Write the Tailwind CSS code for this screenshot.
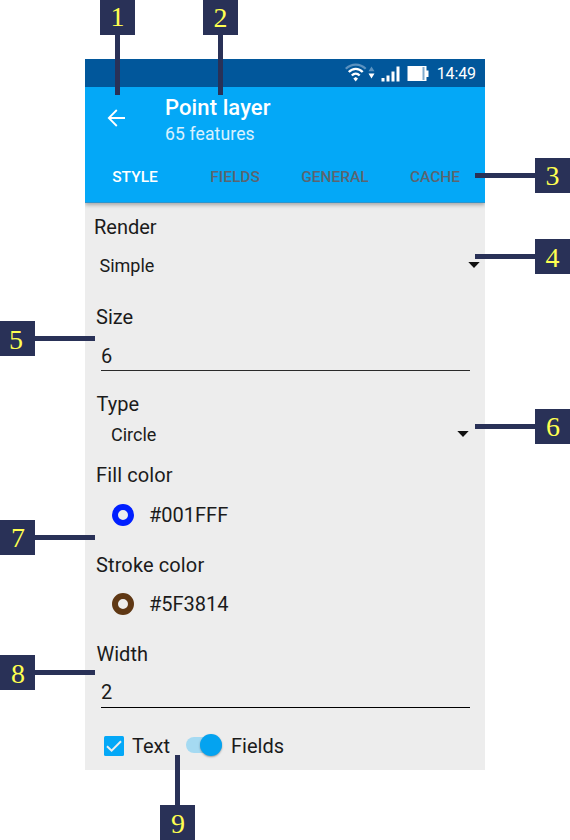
<!DOCTYPE html>
<html lang="en">
<head>
<meta charset="utf-8">
<title>Point layer</title>
<script src="https://cdn.jsdelivr.net/npm/@tailwindcss/browser@4"></script>
</head>
<body class="bg-white">
<div class="relative h-[840px] w-[570px] overflow-hidden pt-[59px] pl-[85px] font-['Roboto',sans-serif]">
  <main class="flex h-[711px] w-[400px] flex-col bg-[#ededed] text-xl text-[#1b1b1b]">
    <header class="relative h-[144px] shrink-0 border-b border-[#2d94cc] bg-[#04a8f7] shadow-[0_2px_4px_rgba(0,0,0,0.3)] [clip-path:inset(0_0_-8px_0)]">
      <div class="flex h-7 items-center justify-end bg-[#01579b] pr-[9px] text-white">
        <svg class="mr-[8px]" width="84" height="28" viewBox="0 0 84 28" aria-hidden="true">
          <g fill="none" stroke-width="2.300">
            <path d="M.8 9.800C6.500 4.200 15 4.200 20.700 9.800" stroke="#5b92c0"/>
            <path d="M3.800 13C7.800 8.700 13.700 8.700 17.700 13" stroke="#fff"/>
            <path d="M6.800 16.500C9.200 14 12.300 14 14.700 16.500" stroke="#fff"/>
          </g>
          <path d="M8.300 19.500 10.700 18 13 19.500 10.700 22.500Z" fill="#fff"/>
          <path d="M23.500 12.300 26.500 7.500 29.500 12.300Z" fill="#5b92c0"/>
          <path d="M23.500 14.500 26.500 19.500 29.500 14.500Z" fill="#fff"/>
          <path d="M36.500 19h3v3.500h-3zM41.500 16.500h3v6h-3zM46.500 12.500h3v10h-3zM51.500 7.500h3v15h-3z" fill="#fff"/>
          <path d="M62.500 7h19v4.500h2v6.500h-2v4h-19z" fill="#fff"/>
          <path d="M77.500 8h2v13h-2z" fill="#80abcd"/>
        </svg>
        <span class="mt-0.5 text-[16px] leading-5 tracking-[-0.1px]">14:49</span>
      </div>
      <div class="flex h-[63px] pt-[9px] pl-[22px] text-white">
        <svg class="mt-[13px]" width="20" height="18" viewBox="0 0 20 18" fill="none" stroke="#fff" stroke-width="1.800" aria-hidden="true"><path d="M18 9H2M9.800 1 1.800 9l8 8"/></svg>
        <div class="ml-[38px]">
          <h1 class="text-[22px] leading-[24px] font-medium tracking-[0.1px]">Point layer</h1>
          <p class="text-[17.500px] leading-[29px] tracking-[0.150px] text-white/85">65 features</p>
        </div>
      </div>
      <nav class="grid h-[52px] grid-cols-4 items-center pt-[3px] text-center text-[15.500px] font-medium text-[#5c6470]">
        <span class="text-white">STYLE</span><span>FIELDS</span><span>GENERAL</span><span>CACHE</span>
      </nav>
    </header>

    <div class="flex h-12 items-center pb-px pl-[9px]">Render</div>
    <div class="flex h-[30px] items-center justify-between pr-[5px] pl-[14.500px] text-lg">Simple
      <svg class="mb-[2px]" width="12" height="6" viewBox="0 0 12 6" aria-hidden="true"><path d="M.3 0h11.400L6 6z" fill="#111"/></svg>
    </div>
    <div class="mt-[16px] mb-px flex h-10 items-center pl-[11px]">Size</div>
    <div class="mr-[15px] ml-4 flex h-[33px] items-center border-b border-[#2a2a2a] pt-1">6</div>
    <div class="mt-[18px] flex h-[30px] items-center pl-[11.500px]">Type</div>
    <div class="flex h-8 items-center justify-between pr-4 pl-[26px] text-lg">Circle
      <svg class="mb-[2px]" width="12" height="6" viewBox="0 0 12 6" aria-hidden="true"><path d="M.3 0h11.400L6 6z" fill="#111"/></svg>
    </div>
    <div class="flex h-12 items-center pl-[11px] tracking-[0.120px]">Fill color</div>
    <div class="flex h-8 items-center gap-[15px] pl-[27px]"><span class="mb-px size-[22px] rounded-full border-6 border-[#001fff]"></span>#001FFF</div>
    <div class="mt-[14px] flex h-10 items-center pl-[11px] tracking-[0.120px]">Stroke color</div>
    <div class="flex h-[38px] items-center gap-[15px] pl-[27px]"><span class="mb-px size-[22px] rounded-full border-6 border-[#5f3814]"></span>#5F3814</div>
    <div class="mt-[11px] flex h-10 items-center pl-[11.500px]">Width</div>
    <div class="mr-[15px] ml-4 flex h-[34px] items-center border-b border-black pt-[3px]">2</div>
    <div class="mt-[14px] flex h-12 items-center pl-[19px]">
      <svg class="mb-px" width="20" height="20" viewBox="0 0 20 20" aria-hidden="true"><rect width="20" height="20" rx="1.500" fill="#04a8f7"/><path d="M3 10.200 7.600 14.700 17 5.200" fill="none" stroke="#ededed" stroke-width="2"/></svg>
      <span class="ml-2">Text</span>
      <span class="mb-[2px] ml-[16px] flex h-4 w-9 items-center justify-end rounded-full bg-[#a5daf2]"><span class="size-[22px] shrink-0 rounded-full bg-[#04a3f0] shadow-[0_1px_2px_rgba(0,0,0,0.35)]"></span></span>
      <span class="ml-[9px]">Fields</span>
    </div>
  </main>

  <!-- numbered callouts over the screen -->
  <div class="font-['Liberation_Serif',serif] text-[28px] leading-[35px] text-[#ffff50]">
    <div class="absolute top-0 left-[100px] flex flex-col items-center"><b class="h-[35px] w-[35px] bg-[#293157] text-center font-normal leading-[33px]">1</b><i class="h-[60px] w-[5px] bg-[#293157]"></i></div>
    <div class="absolute top-0 left-[203px] flex flex-col items-center"><b class="h-[35px] w-[35px] bg-[#293157] text-center font-normal">2</b><i class="h-[60px] w-[5px] bg-[#293157]"></i></div>
    <div class="absolute top-[158px] left-[475px] flex items-center"><i class="h-[5px] w-[60px] bg-[#293157]"></i><b class="h-[35px] w-[35px] bg-[#293157] text-center font-normal">3</b></div>
    <div class="absolute top-[239px] left-[475px] flex items-center"><i class="h-[5px] w-[60px] bg-[#293157]"></i><b class="h-[35px] w-[35px] bg-[#293157] text-center font-normal leading-[37px]">4</b></div>
    <div class="absolute top-[321px] left-0 flex items-center"><b class="h-[35px] w-[35px] bg-[#293157] pr-[3px] text-center font-normal leading-[37px]">5</b><i class="h-[5px] w-[60px] bg-[#293157]"></i></div>
    <div class="absolute top-[409px] left-[475px] flex items-center"><i class="h-[5px] w-[60px] bg-[#293157]"></i><b class="h-[35px] w-[35px] bg-[#293157] pl-px text-center font-normal">6</b></div>
    <div class="absolute top-[520px] left-0 flex items-center"><b class="h-[35px] w-[35px] bg-[#293157] pl-px text-center font-normal">7</b><i class="h-[5px] w-[60px] bg-[#293157]"></i></div>
    <div class="absolute top-[655px] left-0 flex items-center"><b class="h-[35px] w-[35px] bg-[#293157] pl-px text-center font-normal leading-[37px]">8</b><i class="h-[5px] w-[60px] bg-[#293157]"></i></div>
    <div class="absolute top-[755px] left-[160px] flex flex-col items-center"><i class="h-[50px] w-[5px] bg-[#293157]"></i><b class="h-[35px] w-[35px] bg-[#293157] pl-px text-center font-normal leading-[37px]">9</b></div>
  </div>
</div>
</body>
</html>
